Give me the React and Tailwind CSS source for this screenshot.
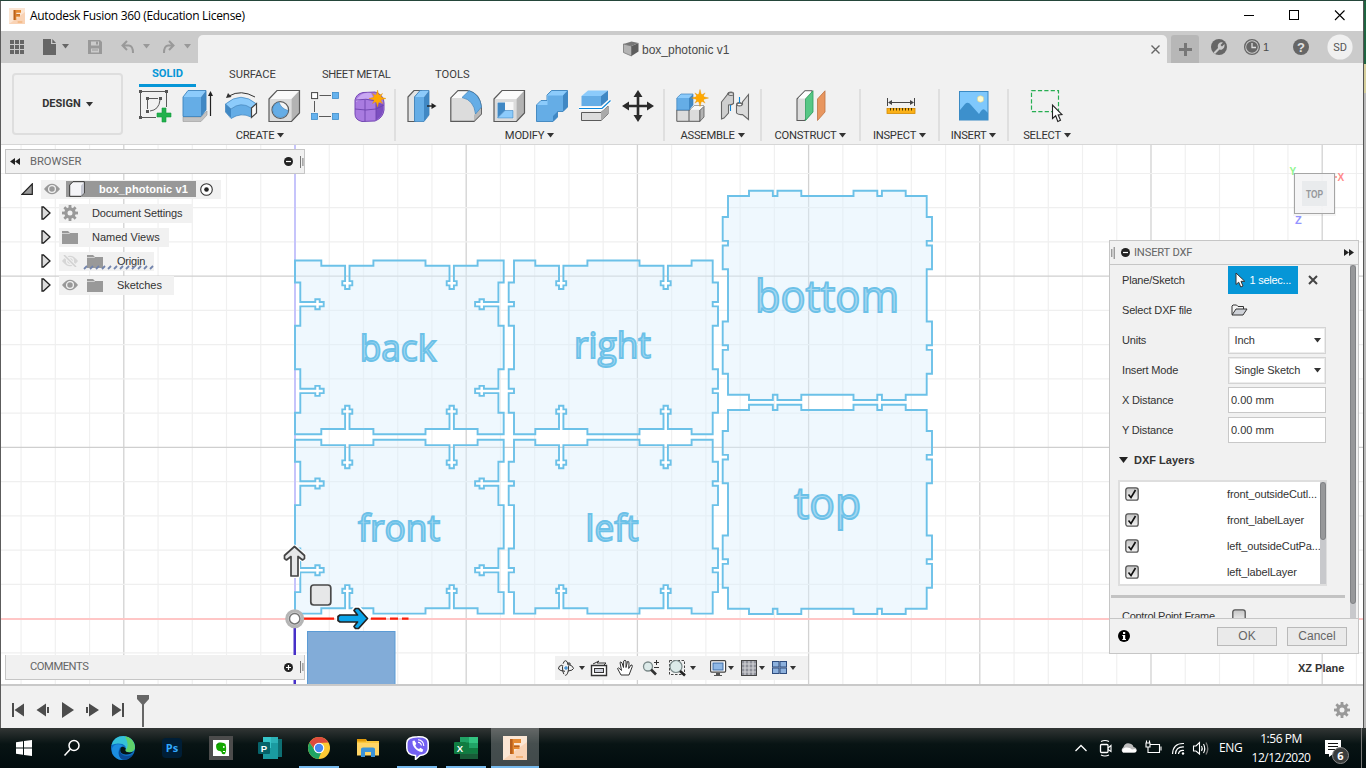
import React from "react";

const UI = "font-['Liberation_Sans',Arial,sans-serif]";

/* ---------- small shared pieces ---------- */

function Caret({ className = "text-[#333]" }) {
  return (
    <svg width="7" height="5" viewBox="0 0 7 5" className={"shrink-0 " + className}>
      <path d="M0 0H7L3.5 4.6Z" fill="currentColor" />
    </svg>
  );
}

function GearShape({ size = 16 }) {
  return (
    <svg width={size} height={size} viewBox="0 0 16 16" fill="#999" className="shrink-0">
      {[0, 45, 90, 135, 180, 225, 270, 315].map((a) => (
        <rect key={a} x="6.6" y="0" width="2.8" height="4" transform={`rotate(${a} 8 8)`} />
      ))}
      <circle cx="8" cy="8" r="4.1" fill="none" stroke="#999" strokeWidth="3.2" />
    </svg>
  );
}

function FusionLogo({ size = 16 }) {
  return (
    <svg width={size} height={size} viewBox="0 0 24 24" className="shrink-0">
      <rect width="24" height="24" fill="#fbe6d4" />
      <path d="M0 24L24 6V24Z" fill="#f9d3b5" />
      <path d="M7 3H18V7H11V9.5H16.5V13H11V18H7Z" fill="#e58a33" />
      <path d="M7 3H9.6V18H7ZM11 9.5H16.5V11H11Z" fill="#b9601d" />
      <path d="M13 20H20V22H13Z" fill="#f2b278" />
    </svg>
  );
}

/* ---------- title bar ---------- */

function TitleBar() {
  return (
    <div className="flex h-[30px] items-center bg-white pl-[8px]">
      <FusionLogo size={16} />
      <span className="ml-[5px] w-[215px] whitespace-nowrap font-['Open_Sans','Noto_Sans',sans-serif] text-[12px] tracking-[-0.31px] text-black">
        Autodesk Fusion 360 (Education License)
      </span>
      <div className="ml-auto flex h-full items-center pr-[17px]">
        <svg width="102" height="12" viewBox="0 0 102 12" fill="none" stroke="#000" strokeWidth="1">
          <path d="M0 5.5H10" />
          <rect x="45.5" y=".5" width="9" height="9" />
          <path d="M91 .5L100.500 10M100.500 .5L91 10" strokeWidth="1.1" />
        </svg>
      </div>
    </div>
  );
}

/* ---------- document tab bar ---------- */

function QuickBar() {
  return (
    <div className="flex w-[197px] items-center">
      <svg width="197" height="32" viewBox="1 31 197 32">
        <g fill="#666">
          {[0, 1, 2].map((r) =>
            [0, 1, 2].map((c) => <rect key={r + "-" + c} x={10 + c * 5} y={40 + r * 5} width="4" height="4" />)
          )}
          <path d="M43 39H51V44H56V55H43ZM52.300 39L56 43H52.300Z" />
          <path d="M62 44H69L65.500 48.500Z" />
        </g>
        <g fill="#999">
          <path d="M88 40H100L102 42V54H88ZM91 41.500V45.500H99V41.500ZM91 48.500V52.500H99V48.500Z" fillRule="evenodd" />
          <rect x="96" y="41.500" width="2" height="3" />
          <path d="M92 49.500H98V50.500H92Z" />
          <path d="M143 44H150L146.500 48.500ZM184 44H191L187.500 48.500Z" />
        </g>
        <path d="M127 41L122.500 45.500L127 50M123 45.500H129Q133 46 133 53" fill="none" stroke="#999" strokeWidth="2" />
        <path d="M169 41L173.500 45.500L169 50M173 45.500H168Q164 46 164 53" fill="none" stroke="#999" strokeWidth="2" />
      </svg>
    </div>
  );
}

function TabBar() {
  return (
    <div className="flex h-[32px] bg-[#cbcbcb]">
      <QuickBar />
      <div className="mt-[4px] flex w-[969px] shrink-0 items-center rounded-t-[5px] bg-[#f1f1f1] pr-[7px]">
        <svg width="16" height="16" viewBox="0 0 16 16" className="ml-[425px] shrink-0">
          <path d="M.5 3L8.500 5V15L.5 11.500Z" fill="#b4b4b4" stroke="#777" strokeWidth=".8" />
          <path d="M8.500 5L15.500 2V10.500L8.500 15Z" fill="#5e5e5e" />
          <path d="M.5 3L8.500 .5L15.500 2L8.500 5Z" fill="#777" />
        </svg>
        <span className="ml-[3px] mt-[1px] whitespace-nowrap text-[12px] text-[#4a4a4a]">box_photonic v1</span>
        <svg width="9" height="9" viewBox="0 0 9 9" className="ml-auto" stroke="#666" strokeWidth="1.400">
          <path d="M.5 .5L8.500 8.500M8.500 .5L.5 8.500" />
        </svg>
      </div>
      <div className="ml-[4px] mt-[4px] flex w-[28px] shrink-0 items-center justify-center rounded-t-[3px] bg-[#b7b7b7]">
        <svg width="13" height="13" viewBox="0 0 13 13" fill="#777">
          <path d="M5 0H8V5H13V8H8V13H5V8H0V5H5Z" />
        </svg>
      </div>
      <svg width="156" height="32" viewBox="1199 31 156 32" className="shrink-0">
        <circle cx="1219" cy="47" r="8" fill="#666" />
        <path d="M1213.500 52.500L1218 48Q1217 44 1220 42.500Q1221.500 42 1223 42.500L1220.500 45L1222 46.500L1224.500 44Q1225 48 1222 49.500Q1221 50 1219.500 49.500L1215 54Z" fill="#cbcbcb" />
        <circle cx="1252" cy="47" r="7.400" fill="none" stroke="#666" strokeWidth="1.300" />
        <circle cx="1252" cy="47" r="5.800" fill="#666" />
        <path d="M1252 43V47.500H1256" fill="none" stroke="#ddd" strokeWidth="1.300" />
        <text x="1263" y="51" fontSize="11" fill="#4a4a4a">1</text>
        <circle cx="1301" cy="47" r="8" fill="#666" />
        <text x="1301" y="51.800" fontSize="13" fontWeight="bold" fill="#e2e2e2" textAnchor="middle">?</text>
        <circle cx="1340" cy="47" r="12.600" fill="#f0f0f0" />
        <text x="1340" y="51" fontSize="11" fill="#555" textAnchor="middle" fontFamily="Roboto,'Liberation Sans',sans-serif">SD</text>
      </svg>
    </div>
  );
}

/* ---------- ribbon icons (32 x 32) ---------- */

const ink = "#5a5a5a";
const ic = {
  sketch: (
    <g>
      <path d="M3 1.500H26M1.500 3V26M3 27.500H17M27.500 3V17" stroke={ink} fill="none" strokeDasharray="23 0" />
      <path d="M10 8.500H19M8.500 10V19M21 10Q20 20 11 21" stroke={ink} fill="none" />
      <g fill="#555">
        <rect width="3" height="3" /><rect x="26" width="3" height="3" /><rect y="26" width="3" height="3" />
        <rect x="7" y="7" width="3" height="3" /><rect x="20" y="7" width="3" height="3" /><rect x="7" y="20" width="3" height="3" />
      </g>
      <path d="M23 18H27V23H32V27H27V32H23V27H18V23H23Z" fill="#22b14c" stroke="#129b3c" strokeWidth=".6" />
    </g>
  ),
  extrude: (
    <g>
      <path d="M1 27H19L25 21V25L19 31.500H1Z" fill="#c2c2c2" stroke="#999" strokeWidth=".6" />
      <path d="M1 7L6 .5H24L19 7Z" fill="#8ccbfb" /><path d="M1 7H19V26.500H1Z" fill="#65ade6" />
      <path d="M19 7L24 .5V20L19 26.500Z" fill="#4088c4" />
      <path d="M1 7L6 .5H24V20L19 26.500H1Z" fill="none" stroke="#3c83bd" strokeWidth=".9" />
      <path d="M28.500 26V3" stroke="#222" strokeWidth="1.200" /><path d="M26 6L28.500 1L31 6Z" fill="#222" />
    </g>
  ),
  revolve: (
    <g>
      <path d="M.5 14Q16 .5 31.500 14L26 18Q16 11 6 19Z" fill="#8ccbfb" />
      <path d="M.5 14L6 19V28L.5 22Z" fill="#4088c4" /><path d="M6 19Q16 11 26 18V27Q16 22 6 28.500Z" fill="#65ade6" />
      <path d="M.5 14Q16 .5 31.500 14L26 18Q16 11 6 19ZM.5 14V22L6 28.500Q16 22 26 27" fill="none" stroke="#3c83bd" strokeWidth=".7" />
      <path d="M26.500 18L31.500 13.500V23L26.500 27.500Z" fill="#fafafa" stroke="#444" strokeWidth="1.200" />
      <path d="M4 6Q16 -1 30 7" fill="none" stroke="#333" /><path d="M1 8L3 3L6.500 7Z" fill="#333" />
    </g>
  ),
  hole: (
    <g>
      <path d="M1 9L9 .5H31.500L23.500 9Z" fill="#fafafa" /><path d="M1 9H23.500V31.500H1Z" fill="#dcdcdc" />
      <path d="M23.500 9L31.500 .5V23L23.500 31.500Z" fill="#b3b3b3" />
      <path d="M1 9L9 .5H31.500V23L23.500 31.500H1Z" fill="none" stroke={ink} strokeWidth="1.200" />
      <circle cx="12.300" cy="20" r="8.300" fill="#f5f5f5" stroke={ink} strokeWidth="1.200" />
      <path d="M11 12.200Q13 18.500 20 20.500A7.700 7.700 0 1 1 11 12.200Z" fill="#65ade6" stroke="#3c83bd" strokeWidth=".6" />
    </g>
  ),
  pattern: (
    <g>
      <path d="M8.500 5.500H20M3.500 11V22M8 26.500H20" stroke={ink} fill="none" />
      <rect x=".6" y="2.600" width="6" height="6" fill="#fff" stroke="#444" />
      <g fill="#65b2ee" stroke="#3f8dca" strokeWidth=".8">
        <rect x="21.500" y="2.500" width="6" height="6" /><rect x=".5" y="23.500" width="6" height="6" /><rect x="21.500" y="23.500" width="6" height="6" />
      </g>
    </g>
  ),
  form: (
    <g>
      <path d="M1 10Q2 4 9 2.500L21 2Q30 5 30 13V20Q29 28 21 31L8 31.500Q1 30 1 24Z" fill="#a97be0" stroke="#7549b5" />
      <path d="M2 10Q8 1 17 3L20 9Q8 8 2 12Z" fill="#c9a8f2" /><path d="M22 12L29 14V21Q28 27 22 30Z" fill="#7c4fc0" />
      <path d="M1 19Q12 21 22 19L30 15M11 10V31.500M22 12V30M2 10Q12 8 22 11" stroke="#6d43ad" fill="none" strokeWidth=".9" />
      <Star x={23.500} y={8.500} />
    </g>
  ),
  press: (
    <g>
      <path d="M1 7L7 .5H14L8 7V31.500H1Z" fill="#e3e3e3" stroke={ink} strokeWidth="1.200" />
      <path d="M7.500 7L13 .5H22L17 7Z" fill="#8ccbfb" /><path d="M7.500 7H17V31.500H7.500Z" fill="#65ade6" /><path d="M17 7L22 .5V25L17 31.500Z" fill="#4088c4" />
      <path d="M7.500 7L13 .5H22V25L17 31.500H7.500Z" fill="none" stroke="#3c83bd" strokeWidth=".8" />
      <path d="M20 16H26" stroke="#222" strokeWidth="1.400" /><path d="M24.500 13L29.500 16L24.500 19Z" fill="#222" />
    </g>
  ),
  fillet: (
    <g>
      <path d="M.8 8L8 .7H17Q30 3 31.300 18V24L24 31.300H.8Z" fill="#dcdcdc" stroke={ink} strokeWidth="1.200" />
      <path d="M1.500 8L8 1.500H18L13 8Z" fill="#fafafa" />
      <path d="M24 25L31 18V24L24 31Z" fill="#b9b9b9" />
      <path d="M12 7.500L19 .7Q30 4 31.500 17L25.500 24Q24 10 12 7.500Z" fill="#65ade6" stroke="#3c83bd" strokeWidth=".7" />
    </g>
  ),
  shell: (
    <g>
      <path d="M1 9L9 .5H31.500L23.500 9Z" fill="#fafafa" /><path d="M1 9H23.500V31.500H1Z" fill="#dcdcdc" />
      <path d="M23.500 9L31.500 .5V23L23.500 31.500Z" fill="#b3b3b3" />
      <path d="M1 9L9 .5H31.500V23L23.500 31.500H1Z" fill="none" stroke={ink} strokeWidth="1.200" />
      <rect x="4" y="12" width="16.500" height="16.500" fill="#f8f8f8" />
      <path d="M4.500 12.500H12V20.500L4.500 28Z" fill="#4088c4" /><path d="M12 20.500H20V28H4.500Z" fill="#8ccbfb" stroke="#3c83bd" strokeWidth=".6" />
    </g>
  ),
  combine: (
    <g>
      <path d="M.5 15L5 10.500H11V5L15.500 .5H31.500V17L27 21.500H21.500V27L17 31.500H.5Z" fill="#65ade6" stroke="#3c83bd" strokeWidth=".9" />
      <path d="M1 15L5 11H11V5.500L16 1H31L27 5.500H11.500V15Z" fill="#8ccbfb" />
      <path d="M27 5.500L31.500 .8V17L27 21.500ZM17 26V31.500L21.500 27V21.500Z" fill="#4088c4" />
    </g>
  ),
  split: (
    <g>
      <path d="M2.500 22.500H22L29 16V24L22 30.500H2.500Z" fill="#dcdcdc" stroke={ink} />
      <path d="M22 22.500L29 16V24L22 30.500Z" fill="#aaa" />
      <path d="M2.500 6L9 .5H29L22 6Z" fill="#8ccbfb" /><path d="M2.500 6H22V16H2.500Z" fill="#65ade6" /><path d="M22 6L29 .5V10L22 16Z" fill="#4088c4" />
      <path d="M0 18.500H23L31.500 10.500" fill="none" stroke="#fff" strokeWidth="3.500" />
      <path d="M0 18.500H23L31.500 10.500" fill="none" stroke="#0d86d8" strokeWidth="1.200" />
    </g>
  ),
  move: (
    <path d="M16 0L20.500 7H17.300V14.700H25V11.500L32 16L25 20.500V17.300H17.300V25H20.500L16 32L11.500 25H14.700V17.300H7V20.500L0 16L7 11.500V14.700H14.700V7H11.500Z" fill="#2b2b2b" />
  ),
  component: (
    <g>
      <path d="M.8 20H14L18 16H28L24 20V31.300H.8Z" fill="#dcdcdc" stroke={ink} /><path d="M13 20V31" stroke={ink} />
      <path d="M24 20.500L28 16V27L24 31.300Z" fill="#b3b3b3" stroke={ink} strokeWidth=".8" /><path d="M14 19.800L18 16H28L24 19.800Z" fill="#fafafa" />
      <path d="M.8 8L5 4H17L13 8Z" fill="#8ccbfb" /><path d="M.8 8H13V20H.8Z" fill="#65ade6" /><path d="M13 8L17 4V15L13 20Z" fill="#4088c4" />
      <path d="M.8 8L5 4H17V15L13 20H.8Z" fill="none" stroke="#3c83bd" strokeWidth=".7" />
      <Star x={24} y={8} />
    </g>
  ),
  joint: (
    <g stroke="#666" strokeWidth="1.100">
      <path d="M2.500 12L8 5Q9 2 12 2Q14.500 2 14.500 4V13.500Q13 15 9.500 15V23L5 28L2.500 29Z" fill="#cfcfcf" />
      <ellipse cx="12" cy="4" rx="2.600" ry="1.400" fill="#fff" />
      <path d="M29.500 4.500L23.500 12V14Q22 12.500 20.500 12.500Q17.500 12.500 17.500 15V23Q19 25 23.500 24.500L29.500 29.500Z" fill="#dadada" /><ellipse cx="20.500" cy="14.500" rx="2.600" ry="1.400" fill="#fff" />
      <path d="M11.500 15V21M20.500 7V13" stroke="#0d86d8" />
    </g>
  ),
  construct: (
    <g>
      <path d="M1 9L9 .7H16V22L8.500 30.500H1Z" fill="#dcdcdc" stroke={ink} strokeWidth="1.100" /><path d="M2 8.500L9 1.500H15.500L9 8.500Z" fill="#fff" />
      <path d="M9.500 9L17 .8V22L9.500 30.500Z" fill="#57c785" stroke="#2f9e5d" strokeWidth=".8" />
      <path d="M21.500 9L29 .8V22L21.500 30.500Z" fill="#e8965f" stroke="#bf7443" strokeWidth=".8" />
    </g>
  ),
  inspect: (
    <g>
      <path d="M2.500 8V16M29.500 8V16M4 12.500H28" stroke="#444" fill="none" /><path d="M3 12.500L7 10V15ZM29 12.500L25 10V15Z" fill="#444" />
      <rect x="2" y="18.500" width="28" height="5" fill="#fbb117" stroke="#d48a00" strokeWidth=".8" />
      <path d="M5.500 18V20.500M8.500 18V20.500M11.500 18V20.500M14.500 18V20.500M17.500 18V20.500M20.500 18V20.500M23.500 18V20.500M26.500 18V20.500" stroke="#4d3a00" />
    </g>
  ),
  insert: (
    <g>
      <rect x="1.500" y="1.500" width="28.500" height="28.500" fill="#7fc8fc" stroke="#3a8ac4" />
      <circle cx="22.500" cy="9" r="3.200" fill="#fdfbd2" stroke="#d6d39a" strokeWidth=".7" />
      <path d="M2 20L7 14Q10 11 13 15L21 24L23 21Q25 18 27 20L30 23V30H2Z" fill="#3d90cc" />
    </g>
  ),
  select: (
    <g>
      <rect x="1.500" y=".6" width="27" height="21" fill="none" stroke="#27ae52" strokeWidth="1.200" strokeDasharray="4.200 2.200" />
      <path d="M22.500 15V28.500L25.700 25.800L27.800 31.500L30.500 30.300L28.200 25L32 24.500Z" fill="#fff" stroke="#222" strokeWidth="1.100" />
    </g>
  ),
};

function Star({ x, y }) {
  return (
    <g transform={`translate(${x} ${y})`} fill="#ffa800" stroke="#e09000" strokeWidth=".4">
      {[0, 45, 90, 135].map((a) => (
        <path key={a} d="M0 -8.500L2.200 0L0 8.500L-2.200 0Z" transform={`rotate(${a}) scale(${a % 90 ? 0.85 : 1})`} />
      ))}
      <circle r="4" stroke="none" />
    </g>
  );
}

const groups = [
  { name: "CREATE", w: "w-[270px]", icons: ["sketch", "extrude", "revolve", "hole", "pattern", "form"], pad: "pl-[4px]" },
  { name: "MODIFY", w: "w-[269px]", icons: ["press", "fillet", "shell", "combine", "split", "move"], pad: "pl-[2px]" },
  { name: "ASSEMBLE", w: "w-[97px]", icons: ["component", "joint"], pad: "pl-[2px]" },
  { name: "CONSTRUCT", w: "w-[99px]", icons: ["construct"], pad: "pl-[3px]" },
  { name: "INSPECT", w: "w-[79px]", icons: ["inspect"], pad: "pl-[2px]" },
  { name: "INSERT", w: "w-[69px]", icons: ["insert"], pad: "pl-[1px]" },
  { name: "SELECT", w: "w-[76px]", icons: ["select"], pad: "pr-[3px]" },
];

const RB = "font-[Roboto,'Liberation_Sans',sans-serif]";

function Ribbon() {
  return (
    <div className="flex h-[82px] border-b border-[#d6d6d6] bg-[#f1f1f1]">
      <div className="w-[125px] shrink-0 pl-[11px] pt-[10px]">
        <div className={"flex h-[62px] w-[111px] items-center justify-center gap-[5px] rounded-[4px] border-2 border-[#dedede] text-[11px] font-bold text-[#333] " + RB}>
          <span className="mt-[1px]">DESIGN</span> <Caret />
        </div>
      </div>
      <div className="flex flex-col">
        <div className={"flex h-[24px] text-[11.200px] text-[#3c3c3c] " + RB}>
          <div className="ml-[13px] flex w-[57px] items-center justify-center border-b-[3px] border-[#0696d7] font-bold text-[#0696d7]"><span className="mt-[2px]">SOLID</span></div>
          <div className="ml-[33px] w-[48px] whitespace-nowrap pt-[4px]">SURFACE</div>
          <div className="ml-[45px] w-[69px] whitespace-nowrap pt-[4px] tracking-[-0.380px]">SHEET METAL</div>
          <div className="ml-[44px] w-[40px] whitespace-nowrap pt-[4px]">TOOLS</div>
        </div>
        <div className="flex pt-[2px]">
          {groups.map((g, i) => (
            <div key={g.name} className={"flex h-[52px] flex-col items-center " + g.w + (i < groups.length - 1 ? " border-r-2 border-[#dfdfdf]" : "")}>
              <div className={"flex gap-[11px] pt-[1px] " + g.pad}>
                {g.icons.map((n) => (
                  <svg key={n} width="32" height="32" viewBox="0 0 32 32" className="shrink-0 overflow-visible">{ic[n]}</svg>
                ))}
              </div>
              <div className={"mt-[6px] flex items-center gap-[3px] whitespace-nowrap text-[11.200px] leading-[14px] tracking-[-0.250px] text-[#333] " + RB}>
                <span className="mt-[1px]">{g.name}</span> <Caret className="-mt-[1px] text-[#333]" />
              </div>
            </div>
          ))}
        </div>
      </div>
    </div>
  );
}

/* ---------- sketch geometry ---------- */

// Side wall with slots cut into the top and bottom edges.
function wallPath(x0, y0, xs, slots, side) {
  const [a, b, c, d, e] = xs;
  const dn = 5.300;
  const top = y0 + dn, H = 173.800, bot = y0 + H - dn, yb = y0 + H;
  let p = `M${x0} ${y0}H${a}V${top}`;
  const slotTop = (s) => `H${s - 2.200}V${y0 + 20.600}H${s - 5}V${y0 + 24.900}H${s - 2.200}V${y0 + 28.500}H${s + 2.200}V${y0 + 24.900}H${s + 5}V${y0 + 20.600}H${s + 2.200}V${top}`;
  const slotBot = (s) => `H${s + 2.200}V${yb - 20.600}H${s + 5}V${yb - 24.900}H${s + 2.200}V${yb - 28.500}H${s - 2.200}V${yb - 24.900}H${s - 5}V${yb - 20.600}H${s - 2.200}V${bot}`;
  p += slotTop(slots[0]) + `H${b}V${y0}H${c}V${top}` + slotTop(slots[1]) + `H${d}V${y0}H${e}`;
  const Y = [22, 65.300, 108.700, 152.300].map((v) => y0 + v);
  const N = [43.700, 130.400].map((v) => y0 + v);
  const xr = side === "tab" ? e + 5.300 : e - 5.300;
  const xl = side === "tab" ? x0 - 5.300 : x0 + 5.300;
  const nr = (n) => side === "tab"
    ? `V${n - 2.200}H${e}V${n + 2.200}H${xr}`
    : `V${n - 2.200}H${e - 19.800}V${n - 5}H${e - 24.200}V${n - 2.200}H${e - 28.600}V${n + 2.200}H${e - 24.200}V${n + 5}H${e - 19.800}V${n + 2.200}H${xr}`;
  const nl = (n) => side === "tab"
    ? `V${n + 2.200}H${x0}V${n - 2.200}H${xl}`
    : `V${n + 2.200}H${x0 + 20.300}V${n + 5}H${x0 + 24.700}V${n + 2.200}H${x0 + 28.700}V${n - 2.200}H${x0 + 24.700}V${n - 5}H${x0 + 20.300}V${n - 2.200}H${xl}`;
  p += `V${Y[0]}H${xr}${nr(N[0])}V${Y[1]}H${e}V${Y[2]}H${xr}${nr(N[1])}V${Y[3]}H${e}V${yb}`;
  p += `H${d}V${bot}` + slotBot(slots[1]) + `H${c}V${yb}H${b}V${bot}` + slotBot(slots[0]) + `H${a}V${yb}H${x0}`;
  p += `V${Y[3]}H${xl}${nl(N[1])}V${Y[2]}H${x0}V${Y[1]}H${xl}${nl(N[0])}V${Y[0]}H${x0}Z`;
  return p;
}

// Square lid with two tabs on each edge.
function lidPath(x, y) {
  const w = 198.700, t = 5.300;
  const T = [[21, 73.300], [125.500, 177.700]];
  const mid = (q) => (q[0] + q[1]) / 2;
  let p = `M${x} ${y}`;
  T.forEach((q) => { p += `H${x + q[0]}V${y - t}H${x + mid(q) - 2.300}V${y}H${x + mid(q) + 2.300}V${y - t}H${x + q[1]}V${y}`; });
  p += `H${x + w}`;
  T.forEach((q) => { p += `V${y + q[0]}H${x + w + t}V${y + mid(q) - 2.300}H${x + w}V${y + mid(q) + 2.300}H${x + w + t}V${y + q[1]}H${x + w}`; });
  p += `V${y + w}`;
  [...T].reverse().forEach((q) => { p += `H${x + q[1]}V${y + w + t}H${x + mid(q) + 2.300}V${y + w}H${x + mid(q) - 2.300}V${y + w + t}H${x + q[0]}V${y + w}`; });
  p += `H${x}`;
  [...T].reverse().forEach((q) => { p += `V${y + q[1]}H${x - t}V${y + mid(q) + 2.300}H${x}V${y + mid(q) - 2.300}H${x - t}V${y + q[0]}H${x}`; });
  return p + "Z";
}

const colA = [321.300, 373.400, 425.500, 477.600, 503.700];
const colB = [535.300, 587.400, 639.500, 691.600, 712.700];
const parts = [
  wallPath(295, 260.500, colA, [347.300, 451.700], "slot"),
  wallPath(295, 439.800, colA, [347.300, 451.700], "slot"),
  wallPath(514, 260.500, colB, [561.200, 665.700], "tab"),
  wallPath(514, 439.800, colB, [561.200, 665.700], "tab"),
  lidPath(728, 196),
  lidPath(728, 410),
];
const labels = [
  ["back", 359.700, 361, 76.500, 36], ["right", 574, 357.500, 77, 36], ["front", 358, 540.500, 82, 36],
  ["left", 585.500, 540.500, 53, 36], ["bottom", 755, 311.500, 144, 43], ["top", 794, 519.300, 67, 43],
];

function Canvas() {
  const vs = [], hs = [];
  for (let k = -8; k <= 31; k++) vs.push([295 + 34.240 * k, k % 5 === 0]);
  for (let k = -1; k <= 13; k++) hs.push([618.600 - 34.240 * k, k % 5 === 0]);
  return (
    <svg width="1362" height="539" viewBox="1 145 1362 539" className="block">
      <rect x="1" y="145" width="1362" height="539" fill="#fff" />
      {vs.map(([x, m]) => <path key={x} d={`M${x} 145V684`} stroke={m ? "#d2d2d2" : "#f0f0f0"} strokeWidth={m ? 1.300 : 1.200} />)}
      {hs.map(([y, m]) => <path key={y} d={`M1 ${y}H1363`} stroke={m ? "#cfcfcf" : "#efefef"} strokeWidth={m ? 1.300 : 1.200} />)}
      <rect x="294" y="145" width="2" height="474" fill="#c6c4fb" />
      <rect x="1" y="618" width="1362" height="2" fill="#ffc6c6" />
      <g fill="#dcf0fc" fillOpacity=".45" stroke="#6cc1e8" strokeWidth="1.900">
        {parts.map((d, i) => <path key={i} d={d} />)}
      </g>
      <g fill="#a5d8f1" stroke="#6cc1e8" strokeWidth="1.800" fontFamily="'Open Sans','Noto Sans',sans-serif">
        {labels.map(([t, x, y, w, s]) => (
          <text key={t} x={x} y={y} textLength={w} lengthAdjust="spacingAndGlyphs" fontSize={s}>{t}</text>
        ))}
      </g>
      <rect x="307.500" y="631.500" width="87.500" height="54" fill="#82acd8" stroke="#5b9bd5" />
      <rect x="293.500" y="626" width="2.500" height="58" fill="#4730c8" />
      <path d="M303 618.700H334M371 618.700H386M390 618.700H398M402 618.700H408.500" stroke="#fb1f0a" strokeWidth="2.200" />
      <circle cx="294.700" cy="618.700" r="8" fill="#d9d9d9" stroke="#b5b5b5" strokeWidth="3" />
      <circle cx="294.700" cy="618.700" r="5.200" fill="#fff" stroke="#777" strokeWidth="1.500" />
      <g transform="translate(294.500 546)" strokeLinejoin="round">
        <path d="M0 .5L10 9.500V12.500L8 14L3.500 10.500V30H-3.500V10.500L-8 14L-10 12.500V9.500Z" fill="#fff" stroke="#fff" strokeWidth="4" />
        <path d="M0 .5L10 9.500V12.500L8 14L3.500 10.500V30H-3.500V10.500L-8 14L-10 12.500V9.500Z" fill="#e6e7e8" stroke="#444" strokeWidth="1.700" />
      </g>
      <g transform="translate(368 618.500) rotate(90)" strokeLinejoin="round">
        <path d="M0 .5L10 9.500V12.500L8 14L3.500 10.500V28L2 30H-2L-3.500 28V10.500L-8 14L-10 12.500V9.500Z" fill="#fff" stroke="#fff" strokeWidth="5" />
        <path d="M0 .5L10 9.500V12.500L8 14L3.500 10.500V28L2 30H-2L-3.500 28V10.500L-8 14L-10 12.500V9.500Z" fill="#0ba5ea" stroke="#222" strokeWidth="1.700" />
      </g>
      <rect x="310.800" y="585" width="20" height="20" rx="3" fill="#e6e7e8" stroke="#4a4a4a" strokeWidth="1.700" />
      <g fontFamily="'Liberation Sans',Arial,sans-serif" fontSize="10" fontWeight="bold">
        <text x="1289.500" y="175" fill="#8ef58e" textLength="6">Y</text>
        <path d="M1335 177H1337" stroke="#ff8b8b" strokeWidth="1.500" />
        <text x="1337.500" y="181" fill="#ff8b8b" textLength="6">X</text>
        <text x="1295" y="223.500" fill="#9393ff" fontSize="11">Z</text>
        <rect x="1293" y="173" width="43" height="43" fill="#000" opacity=".04" />
        <rect x="1294.500" y="173.500" width="40" height="40" fill="#f5f5f6" fillOpacity=".9" stroke="#a5a5a5" />
        <rect x="1302" y="181" width="25" height="25" fill="#e9ebed" />
        <text x="1306" y="197.500" fill="#96989b" fontSize="10.500" textLength="17" lengthAdjust="spacingAndGlyphs">TOP</text>
      </g>
    </svg>
  );
}

/* ---------- browser palette ---------- */

function Bars() {
  return (
    <svg width="4" height="12" viewBox="0 0 4 12" stroke="#777"><path d="M.5 0V12M2.900 2V10" /></svg>
  );
}

function RoundMark({ plus }) {
  return (
    <svg width="9" height="9" viewBox="0 0 9 9">
      <circle cx="4.500" cy="4.500" r="4.500" fill="#222" />
      <path d={plus ? "M2 4.500H7M4.500 2V7" : "M2 4.500H7"} stroke="#fff" strokeWidth="1.200" />
    </svg>
  );
}

function Eye({ off }) {
  return (
    <svg width="16" height="12" viewBox="0 0 16 12" className="shrink-0" opacity={off ? 0.3 : 1}>
      <path d="M0 6Q8 -4.500 16 6Q8 16.500 0 6Z" fill="#999" />
      <circle cx="8" cy="6" r="3.400" fill="none" stroke="#f1f1f1" strokeWidth="1.300" />
      {off && <path d="M2 0L14 12" stroke="#f1f1f1" strokeWidth="3.500" />}
      {off && <path d="M2 0L14 12" stroke="#888" strokeWidth="1.500" />}
    </svg>
  );
}

function Folder() {
  return (
    <svg width="16" height="14" viewBox="0 0 16 14" className="shrink-0"><path d="M0 1H6L8 3H16V14H0Z" fill="#999" /><path d="M0 3.500H7L8 3" stroke="#ddd" fill="none" strokeWidth=".8" /></svg>
  );
}

function Twisty() {
  return (
    <svg width="10" height="14" viewBox="0 0 10 14" className="shrink-0"><path d="M1 1H2.500L9 7L2.500 13H1Z" fill="#dcdcdc" stroke="#222" strokeWidth="1.300" /></svg>
  );
}

function Row({ w, children }) {
  return (
    <div className="flex h-[24px] items-center pl-[36px]">
      <Twisty />
      <div className={"ml-[8px] flex h-[19px] items-center bg-[#f1f1f1] pl-[3px] " + w}>{children}</div>
    </div>
  );
}

function Browser() {
  return (
    <div className="absolute left-[4px] top-[4px] w-[300px] text-[11px] text-[#333]">
      <div className="flex h-[25px] items-center border border-[#c6c6c6] bg-[#f1f1f1] pl-[4px] pr-0 text-[#666]">
        <svg width="10" height="7" viewBox="0 0 10 7"><path d="M5 0V7L0 3.500ZM10 0V7L5 3.500Z" fill="#222" /></svg>
        <span className={"ml-[10px] mt-[1px] text-[11.200px] " + RB}>BROWSER</span>
        <span className="ml-auto mr-[7px]"><RoundMark /></span><Bars />
      </div>
      <div className="pt-[3px]">
        <div className="flex h-[24px] items-center pl-[16px]">
          <svg width="12" height="12" viewBox="0 0 12 12" className="shrink-0"><path d="M11.300 .8V11.300H1Z" fill="#999" stroke="#222" strokeWidth="1.200" /></svg>
          <div className="ml-[8px] flex h-[19px] w-[180px] items-center bg-[#f1f1f1] pl-[3px]">
            <Eye />
            <div className="ml-[6px] flex h-[16px] w-[130px] items-center bg-[#989898] pl-[3px]">
              <svg width="16" height="16" viewBox="0 0 16 16"><path d="M.7 4L4 .7H15.300V12L12 15.300H.7Z" fill="#f4f4f7" stroke="#333" /><path d="M12 4.500L15 1.500V12L12 15Z" fill="#c6c8d2" /></svg>
              <span className="ml-[14px] whitespace-nowrap font-bold tracking-[0.100px] text-white">box_photonic v1</span>
            </div>
            <svg width="13" height="13" viewBox="0 0 13 13" className="ml-[4px]"><circle cx="6.500" cy="6.500" r="5.800" fill="#fff" stroke="#333" strokeWidth="1.100" /><circle cx="6.500" cy="6.500" r="2.300" fill="#222" /></svg>
          </div>
        </div>
        <Row w="w-[134px]"><GearShape /><span className="ml-[14px] whitespace-nowrap tracking-[-0.160px]">Document Settings</span></Row>
        <Row w="w-[110px]"><Folder /><span className="ml-[14px] whitespace-nowrap">Named Views</span></Row>
        <div className="relative">
          <Row w="w-[95px]"><Eye off /><span className="ml-[9px] flex"><Folder /></span><span className="ml-[14px] tracking-[-0.200px]">Origin</span></Row>
          <svg width="72" height="5" viewBox="0 0 72 5" className="absolute left-[78px] top-[16px]">
            {Array.from({ length: 12 }, (_, i) => <path key={i} d={`M${1 + i * 6} 4L${4 + i * 6} 1`} stroke="#7284ad" strokeWidth="1.800" />)}
          </svg>
        </div>
        <Row w="w-[115px]"><Eye /><span className="ml-[9px] flex"><Folder /></span><span className="ml-[14px] tracking-[-0.050px]">Sketches</span></Row>
      </div>
    </div>
  );
}

function Comments() {
  return (
    <div className="absolute left-[4px] top-[510px] flex h-[25px] w-[300px] items-center border border-t-0 border-[#c6c6c6] bg-[#f1f1f1] pl-[24px] pr-0">
      <span className={"mt-[1px] text-[11.200px] tracking-[-0.450px] text-[#666] " + RB}>COMMENTS</span>
      <span className="ml-auto mr-[7px]"><RoundMark plus /></span><Bars />
    </div>
  );
}

/* ---------- insert dialog ---------- */

function Field({ label, children }) {
  return (
    <div className="flex h-[30px] items-center">
      <span className="w-[106px] whitespace-nowrap tracking-[-0.180px]">{label}</span>
      {children}
    </div>
  );
}

function SelectBox({ value }) {
  return (
    <div className="-ml-[0.500px] flex h-[27px] w-[98.500px] items-center justify-between border border-[#d4d4d4] bg-white pl-[6px] pr-[4px] outline-1 -outline-offset-2 outline-[#ececec]">
      <span className="whitespace-nowrap tracking-[-0.120px]">{value}</span><Caret />
    </div>
  );
}

function NumberBox() {
  return <div className="flex h-[26px] w-[98px] items-center border border-[#c8c8c8] bg-white pl-[2px]">0.00 mm</div>;
}

function Check({ on }) {
  return (
    <svg width="14" height="14" viewBox="0 0 14 14" className="shrink-0">
      <defs><linearGradient id="ck" x1="0" y1="0" x2="0" y2="1"><stop offset="0" stopColor="#c4c4c4" /><stop offset="1" stopColor="#f5f5f5" /></linearGradient></defs>
      <rect x=".8" y=".8" width="12.400" height="12.400" rx="2.200" fill="url(#ck)" stroke="#555" strokeWidth="1.300" />
      {on && <path d="M3.500 7.500L6 10.500L10.500 3" fill="none" stroke="#111" strokeWidth="1.600" />}
    </svg>
  );
}

function InsertPanel() {
  return (
    <div className="absolute left-[1108px] top-[95px] flex h-[414px] w-[250px] flex-col border border-[#c6c6c6] bg-[#f1f1f1] text-[11px] text-[#333]">
      <div className="flex h-[24px] shrink-0 items-center border-b border-[#c6c6c6] pl-[1px] pr-[4px] text-[#666]">
        <svg width="4" height="12" viewBox="0 0 4 12" stroke="#777"><path d="M.8 2V10M3.200 0V12" /></svg>
        <span className="ml-[6px]"><RoundMark /></span>
        <span className={"ml-[4px] mt-[1px] text-[11.200px] tracking-[-0.180px] " + RB}>INSERT DXF</span>
        <svg width="10" height="7" viewBox="0 0 10 7" className="ml-auto"><path d="M5 0V7L10 3.500ZM0 0V7L5 3.500Z" fill="#222" /></svg>
      </div>
      <div className="flex h-[353px] shrink-0 overflow-hidden">
        <div className="w-[240px] shrink-0">
          <div className="pl-[12px]">
            <Field label="Plane/Sketch">
              <div className="-ml-[0.500px] flex h-[28px] w-[70px] items-center bg-[#0696d7] pl-[7px] text-white">
                <svg width="11" height="16" viewBox="0 0 11 16"><path d="M1 1V12.500L3.700 10.200L5.800 15L8 14L6 9.300H9.800Z" fill="#fff" stroke="#333" /></svg>
                <span className="ml-[4px] whitespace-nowrap tracking-[-0.250px]">1 selec...</span>
              </div>
              <svg width="10" height="10" viewBox="0 0 10 10" className="ml-[10px]" stroke="#444" strokeWidth="2"><path d="M1 1L9 9M9 1L1 9" /></svg>
            </Field>
            <Field label="Select DXF file">
              <svg width="17" height="12" viewBox="0 0 17 12" className="ml-[3px]"><path d="M1 10.500V2L2 1H5.500L7 2.500H12.500V5" fill="#f4f4f4" stroke="#333" /><path d="M1 11L5 5H16L12 11Z" fill="#cfd2d8" stroke="#333" /></svg>
            </Field>
            <Field label="Units"><SelectBox value="Inch" /></Field>
            <Field label="Insert Mode"><SelectBox value="Single Sketch" /></Field>
            <Field label="X Distance"><NumberBox /></Field>
            <Field label="Y Distance"><NumberBox /></Field>
          </div>
          <div className="flex h-[30px] items-center pl-[9px] font-bold">
            <svg width="9" height="6" viewBox="0 0 9 6"><path d="M0 0H9L4.500 6Z" fill="#222" /></svg>
            <span className="ml-[6px]">DXF Layers</span>
          </div>
          <div className="ml-[8px] mt-[5px] flex h-[106px] w-[209px] border-2 border-r border-[#dedede] bg-white">
            <div className="-mt-px flex-1">
              {["front_outsideCutl...", "front_labelLayer", "left_outsideCutPa...", "left_labelLayer"].map((t) => (
                <div key={t} className="flex h-[26px] items-center pl-[5px]">
                  <Check on />
                  <span className="ml-[88px] w-[93px] whitespace-nowrap tracking-[-0.120px]">{t}</span>
                </div>
              ))}
            </div>
            <div className="w-[6px] shrink-0 bg-[#c8c9cc]"><div className="h-[58px] rounded-[3px] border border-[#808285] bg-[#97989a]" /></div>
          </div>
          <div className="ml-[1px] mt-[9px] h-[3px] w-[234px] bg-[#c3c3c3]" />
          <div className="flex h-[36px] items-center pl-[12px]">
            <span className="w-[110px] whitespace-nowrap tracking-[-0.300px]">Control Point Frame</span><Check />
          </div>
        </div>
        <div className="w-[6px] bg-[#c8c9cc]"><div className="h-[339px] rounded-[3px] border border-[#808285] bg-[#97989a]" /></div>
      </div>
      <div className="flex flex-1 items-center border-t border-[#c6c6c6] pl-[8px] pr-[11px] text-[12px] text-[#666]">
        <svg width="12" height="12" viewBox="0 0 12 12"><circle cx="6" cy="6" r="6" fill="#000" /><path d="M5 2H7.200V4H5ZM4.300 5H7.200V9H8V10H4.300V9H5V6H4.300Z" fill="#fff" /></svg>
        <div className="ml-auto flex h-[19px] w-[60px] items-center justify-center border border-[#b9b9b9] bg-[#eaeaea]">OK</div>
        <div className="ml-[10px] flex h-[19px] w-[60px] items-center justify-center border border-[#b9b9b9] bg-[#eaeaea]">Cancel</div>
      </div>
    </div>
  );
}

/* ---------- view navigation strip ---------- */

function NavStrip() {
  const s = { fill: "none", stroke: "#333", strokeWidth: 1 };
  return (
    <div className="absolute left-[554px] top-[511px] h-[24px] w-[253px] bg-[#f1f1f1]">
      <svg width="253" height="24" viewBox="555 656 253 24">
        <g {...s}>
          <ellipse cx="565.500" cy="668" rx="3" ry="7.300" strokeDasharray="9 1.500" /><path d="M562 665Q558 666 558.500 669Q560 671 565 671.300M568 671Q573 670.500 573.500 668.500Q573 666 570 665" />
          <path d="M564 668H568M566 666V670" stroke="#1979ca" /><path d="M569 662V666M567 664H571" />
          <path d="M591.500 665.500H606.500V675.500H591.500Z" strokeWidth="1.400" fill="#fff" /><rect x="594.500" y="668.500" width="9" height="4" fill="#cfd2dc" /><path d="M593 664L599 661L597 663H606L604 665" />
          <path d="M621 675L617.500 668.500Q618 667 620 669L621.500 670.500L620 662.500Q621 661 622 663L623.500 667.500L623.700 661Q625 659.500 626 661V667.500L627.500 661.500Q629 661 629 663L628.700 668.500L631 665Q632.500 664.500 632.300 666.500L629 675Z" fill="#fff" />
        </g>
        <g>
          <circle cx="648" cy="666.500" r="4.500" fill="#dceae9" stroke="#7b8a8a" strokeWidth="1.300" /><path d="M651 669.500L656 674.500" stroke="#333" strokeWidth="2.600" />
          <path d="M654 662.500H659M656.500 660V665M654 667.500H659" stroke="#333" />
          <rect x="669.500" y="660.500" width="15" height="14" fill="none" stroke="#444" strokeDasharray="2.500 1.500" />
          <circle cx="676" cy="666.500" r="6" fill="#dceae9" stroke="#7b8a8a" strokeWidth="1.200" /><path d="M680 671L685 675.500" stroke="#222" strokeWidth="2.600" />
          <rect x="710.600" y="660.600" width="15" height="11.500" rx="1" fill="#fff" stroke="#444" strokeWidth="1.200" /><rect x="713" y="663" width="10" height="7" fill="#8fb8e6" stroke="#3f6ca5" /><path d="M716 673H720V675H722V676H714V675H716Z" fill="#555" />
          <rect x="741.500" y="660.500" width="15" height="15" fill="#8e9099" /><path d="M741.500 664H756.500M741.500 668H756.500M741.500 672H756.500M745 660.500V675.500M749 660.500V675.500M753 660.500V675.500" stroke="#fff" strokeWidth="1.200" opacity=".6" /><rect x="741.500" y="660.500" width="15" height="15" fill="none" stroke="#444" />
          <g fill="#8db1dd" stroke="#2f4d7e" strokeWidth="1">
            <rect x="772.500" y="661.500" width="6.500" height="5.500" /><rect x="780" y="661.500" width="6.500" height="5.500" /><rect x="772.500" y="668" width="6.500" height="5.500" /><rect x="780" y="668" width="6.500" height="5.500" />
          </g>
        </g>
        <g fill="#333">
          {[579, 690, 728, 759, 790].map((x) => <path key={x} d={`M${x} 666H${x + 6}L${x + 3} 670Z`} />)}
        </g>
      </svg>
    </div>
  );
}

/* ---------- timeline ---------- */

function Timeline() {
  return (
    <div className="flex h-[44px] items-center justify-between border-t-2 border-[#c9c9c9] bg-[#f1f1f1] pr-[13px]">
      <svg width="160" height="42" viewBox="1 686 160 42" fill="#4c4c4c">
        <path d="M12 703H14V717H12ZM24 703.500V716.500L14.500 710ZM46 703.500V716.500L36.500 710ZM47 707H49V713H47ZM62 702V718L74 710ZM86 707H88V713H86ZM89 703.500V716.500L99 710ZM112 703.500V716.500L121.500 710ZM122 703H124V717H122Z" />
        <path d="M137 695H149V699L144 704.500V727H142V704.500L137 699Z" fill="#666" />
      </svg>
      <div className="pt-[6px]"><GearShape /></div>
    </div>
  );
}

/* ---------- taskbar ---------- */

function TaskItem({ w, line, active, children }) {
  return (
    <div className={"relative flex h-[40px] items-center justify-center " + w + (active ? " bg-white/25" : "")}>
      {children}
      {line && <div className={"absolute bottom-0 h-[2px] bg-[#76b9ed] " + (active ? "inset-x-0" : "inset-x-[4px]")} />}
    </div>
  );
}

function Taskbar() {
  return (
    <div className="flex h-[40px] w-[1366px] bg-gradient-to-b from-[#323635] via-[#081414] via-40% to-[#020c0e] text-white">
      <TaskItem w="w-[48px]"><svg width="16" height="16" viewBox="0 0 16 16" fill="#fff"><path d="M0 2.200L7 1.200V7.600H0ZM8 1L16 0V7.600H8ZM0 8.500H7V14.800L0 13.800ZM8 8.500H16V16L8 15Z" /></svg></TaskItem>
      <TaskItem w="w-[48px]"><svg width="18" height="18" viewBox="0 0 18 18" fill="none" stroke="#fff" strokeWidth="1.500"><circle cx="11" cy="6.500" r="5" /><path d="M7.500 10L1.500 16.500" /></svg></TaskItem>
      <TaskItem w="w-[53px]">
        <svg width="24" height="24" viewBox="0 0 24 24">
          <circle cx="12" cy="12" r="12" fill="#0c6fc4" />
          <path d="M.5 9Q3 0 12.500 0Q23 1 24 11Q24 16 18 16.300Q13.500 16 14.500 14Q16 10 11.500 8Q5 6.500 .5 9Z" fill="#35c1d8" />
          <path d="M14 .2Q23 2 24 11Q24 16 18 16.300Q13.500 16 14.500 14Q19 10 14 .2Z" fill="#5ed16a" />
          <path d="M8.500 12Q5.500 20 13 24Q5 24.500 1.500 18Q0 12 3 9.500Q8 7 12.500 10Q9.500 10.500 8.500 12Z" fill="#1b8de0" />
          <path d="M8.500 13Q9 20 16 20Q20 20 22 18Q18 25 11 23.500Q6 20 8.500 13Z" fill="#0a4a94" />
          <path d="M14.800 12.500Q12 9.500 9.500 12Q8 18 15 18.500Q20 18.500 22.500 15.500Q19 17 16 16Q13.500 15 14.800 12.500Z" fill="#061516" />
        </svg>
      </TaskItem>
      <TaskItem w="w-[46px]"><div className="flex h-[20px] w-[20px] items-center justify-center rounded-[4px] bg-[#001e36] font-['Open_Sans',sans-serif] text-[11px] font-bold text-[#31a8ff]">Ps</div></TaskItem>
      <TaskItem w="w-[52px]">
        <svg width="24" height="24" viewBox="0 0 24 24"><rect width="24" height="24" fill="#4c4c4c" /><rect x="4" y="4" width="16" height="16" fill="#fff" /><path d="M7 9.500L10 6.500Q15 6 16.500 8Q18 14 16 18Q12.500 19 12.500 16L11 15Q7 15 7 9.500Z" fill="#14a800" /><path d="M7 9H9.500V6.500Z" fill="#0c7f00" /><circle cx="14.800" cy="11" r=".9" fill="#fff" /><path d="M14 15.500H16" stroke="#fff" /></svg>
      </TaskItem>
      <TaskItem w="w-[46px]">
        <svg width="24" height="22" viewBox="0 0 24 22"><path d="M14 2H24V20H14Z" fill="#0d6f73" /><path d="M5 0H20V22H5Z" fill="#1a9ba1" /><path d="M5 0H13V11H5Z" fill="#36c5c9" /><path d="M13 0H20V6H13Z" fill="#2cb2b7" /><rect y="5" width="12" height="12" rx="1" fill="#06636a" /><text x="6" y="14.500" fontSize="9.500" fontWeight="bold" fill="#fff" textAnchor="middle">P</text></svg>
      </TaskItem>
      <TaskItem w="ml-[2px] w-[48px]" line>
        <svg width="22" height="22" viewBox="0 0 22 22"><circle cx="11" cy="11" r="11" fill="#fcc934" /><path d="M1.500 5.500A11 11 0 0 1 20.500 5.500L11 6L7 13Z" fill="#dd4b3e" /><path d="M1.500 5.500L7 13.500L13 16L10.500 22A11 11 0 0 1 1.500 5.500Z" fill="#1fa463" /><circle cx="11" cy="11" r="5.300" fill="#fff" /><circle cx="11" cy="11" r="4.200" fill="#4688f4" /></svg>
      </TaskItem>
      <TaskItem w="w-[50px]">
        <svg width="22" height="20" viewBox="0 0 22 20"><path d="M0 1H9L10 3H22V17H0Z" fill="#fbc83d" /><path d="M0 1H9V3.500H0Z" fill="#e09a0b" /><path d="M0 5H22V17.500H0Z" fill="#ffd566" /><path d="M4 19V11Q4 9.500 6 9.500H16Q18 9.500 18 11V19H14V14H8V19Z" fill="#3b93d8" /></svg>
      </TaskItem>
      <TaskItem w="w-[48px]" line>
        <svg width="23" height="24" viewBox="0 0 23 24"><path d="M11.500 .8Q22.200 .3 22.200 7V13Q21.500 19 14 19.500L9.500 23.500V19.500Q.8 19 .8 12V7Q.8 1 11.500 .8Z" fill="#7360f2" stroke="#fff" strokeWidth="1.500" /><path d="M6.500 5L8.500 4.500L10.300 7.500L9.300 9.500Q10.500 12.500 13 13L14.500 11.800L17.300 13.800L16.300 16Q14 16.500 11 14.300Q6 10.500 6.500 5Z" fill="#fff" /><path d="M12 3.800Q17.500 4.300 17.800 10M12 6.300Q15 6.500 15.500 9.500" fill="none" stroke="#fff" strokeWidth="1.100" /></svg>
      </TaskItem>
      <TaskItem w="ml-px w-[48px]" line>
        <svg width="24" height="22" viewBox="0 0 24 22"><path d="M6 0H24V22H6Z" fill="#21a366" /><path d="M6 5.500H15V16.500H6Z" fill="#107c41" /><path d="M15 0H24V6H15Z" fill="#33c481" /><path d="M15 11H24V16.500H15Z" fill="#107c41" /><path d="M6 16.500H24V22H6Z" fill="#185c37" /><rect y="5" width="12" height="12" rx="1" fill="#107c41" /><text x="6" y="14.500" fontSize="9.500" fontWeight="bold" fill="#fff" textAnchor="middle">X</text></svg>
      </TaskItem>
      <TaskItem w="ml-px w-[48px]" line active><FusionLogo size={24} /></TaskItem>
      <div className="ml-auto flex">
        <svg width="142" height="40" viewBox="1070 728 142 40" fill="none" stroke="#fff" strokeWidth="1.300">
          <path d="M1075.500 751L1081 745.500L1086.500 751" />
          <rect x="1100.500" y="744.500" width="7.500" height="8" rx="1" /><path d="M1108 748L1111 745.500V751.500L1108 749.500M1101 741.500Q1105 739.500 1109 741.500M1101 755Q1105 757 1109 755" strokeWidth="1.100" />
          <path d="M1123 752.500Q1120 750 1123.500 747Q1125 742.500 1129.500 743.500Q1133 744 1133.500 747Q1137 747.500 1136.500 751Q1136 752.500 1134 752.500Z" fill="#bdbdbd" stroke="none" />
          <path d="M1123 752.500Q1120.500 749 1125.500 747.500Q1130 747 1132 749.500Q1137 748 1136.500 751Q1136 752.500 1134 752.500Z" fill="#fff" stroke="none" />
          <path d="M1150 744.500H1159.500V752.500H1150M1161 746.500V750.500M1146 743H1150V747H1146ZM1146.500 740.500V743M1149.500 740.500V743M1148 747V752.500H1151" strokeWidth="1.100" />
          <path d="M1172.500 754Q1173 743 1184 743.500M1175.500 754Q1176 746.500 1184 747M1178.500 754Q1179 750 1184 750.500" strokeWidth="1.200" /><circle cx="1183" cy="753.500" r="1.200" fill="#fff" stroke="none" />
          <path d="M1193.500 746H1196L1199.500 742.500V754L1196 751H1193.500ZM1201.500 746Q1203 748.500 1201.500 751M1203.500 744Q1206 748.500 1203.500 753" strokeWidth="1.100" /><path d="M1206 742.500Q1209.500 748.500 1206 754.500" stroke="#777" />
        </svg>
        <div className="ml-[7px] flex w-[28px] items-center whitespace-nowrap font-['Open_Sans',sans-serif] text-[12px] tracking-[-0.350px]">ENG</div>
        <div className="flex w-[68px] flex-col items-center justify-center whitespace-nowrap font-['Open_Sans',sans-serif] text-[12px] leading-[19px] tracking-[-0.480px]">
          <span>1:56 PM</span><span>12/12/2020</span>
        </div>
        <svg width="51" height="40" viewBox="1315 728 51 40">
          <path d="M1325 740H1341V754H1333L1329 757V754H1325Z" fill="#fff" /><path d="M1328 743.500H1338M1328 746.500H1338M1328 749.500H1335" stroke="#111" />
          <circle cx="1340.500" cy="755.500" r="8" fill="#3a3d3d" stroke="#8a8a8a" />
          <text x="1340.500" y="759.500" fontSize="11" fontWeight="bold" fill="#fff" textAnchor="middle" fontFamily="'Open Sans',sans-serif">6</text>
          <path d="M1361.500 728V768" stroke="#777" />
        </svg>
      </div>
    </div>
  );
}

export default function App() {
  return (
    <div className={"flex h-[768px] w-[1366px] flex-col overflow-hidden bg-[#f1f1f1] " + UI}>
      <div className="h-[1px] shrink-0 bg-[#24463a]" />
      <div className="flex h-[727px] shrink-0">
        <div className="w-[1px] bg-[#5c5c5c]" />
        <div className="w-[1362px]">
          <TitleBar />
          <TabBar />
          <Ribbon />
          <div className="relative h-[539px]">
            <Canvas />
            <Browser />
            <Comments />
            <NavStrip />
            <InsertPanel />
            <div className="absolute left-[1297px] top-[515px] whitespace-nowrap text-[11px] font-bold text-[#333]">XZ Plane</div>
          </div>
          <Timeline />
        </div>
        <div className="w-[1px] bg-[#555]" />
        <div className="flex w-[2px] flex-col">
          <div className="h-[63px] bg-[#1f6440]" />
          <div className="h-[29px] bg-[#d6cf9c]" />
          <div className="flex-1 bg-[#b9b9b9]" />
        </div>
      </div>
      <Taskbar />
    </div>
  );
}
